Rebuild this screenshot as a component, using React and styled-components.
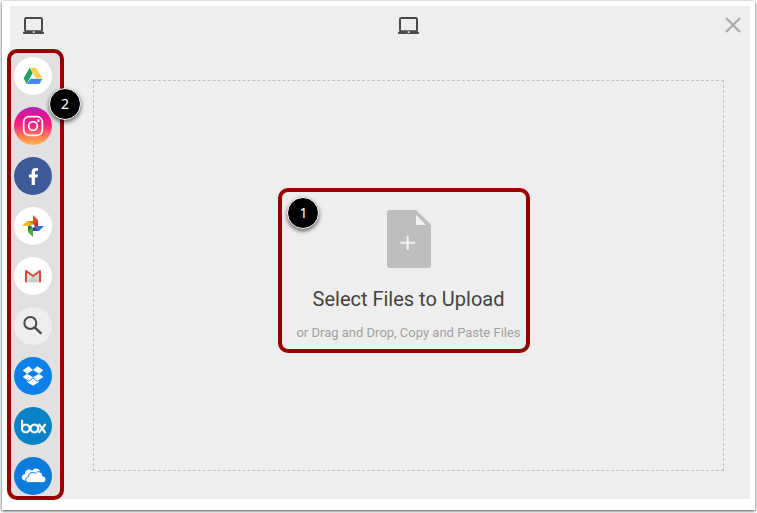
import React from 'react';
import styled, { createGlobalStyle } from 'styled-components';
import { FaFacebookF } from 'react-icons/fa';
import { SiBox } from 'react-icons/si';


const GlobalStyle = createGlobalStyle`
    * {
        box-sizing: border-box;
    }

    body {
        margin: 0;
        background-color: #FFF;
        font-family: Roboto, 'Liberation Sans', sans-serif;
    }

    button {
        padding: 0;
        border: 0;
        background: none;
        font: inherit;
        color: inherit;
        cursor: pointer;
    }

    svg {
        display: block;
    }
`;

const Page = styled.div`
    display: flex;
    min-height: 100vh;
    padding: 1px 2px 3px;
`;

const Frame = styled.div`
    display: flex;
    flex: 1;
    padding: 5px 5px 11px 8px;
    background-color: #FFF;
    box-shadow: 0 1px 3px rgba(0, 0, 0, 0.75);
`;

const Picker = styled.div`
    display: flex;
    flex: 1;
    flex-direction: column;
    background-color: #EEE;
`;

const Header = styled.header`
    display: grid;
    grid-template-columns: 83px 1fr 26px;
    align-items: center;
    height: 44px;
    padding-bottom: 6px;
    color: #4A4A4A;
`;

const DeviceButton = styled.button`
    justify-self: start;
    margin-left: 13px;
`;

const Title = styled.div`
    justify-self: center;
`;

const CloseButton = styled.button`
    justify-self: start;
    margin-left: 1px;
    color: #A8A8A8;
`;

const Body = styled.div`
    display: flex;
    flex: 1;
`;

const Sidebar = styled.nav`
    position: relative;
    display: flex;
    flex-direction: column;
    gap: 12px;
    width: 50px;
    padding: 7px 0 4px 4px;
    background-color: #E1E1E1;
`;

const Source = styled.button`
    width: 38px;
    height: 38px;
    border-radius: 50%;
    background: ${props => props.$fill};
    color: #FFF;
    display: flex;
    align-items: center;
    justify-content: center;
`;

const DropZone = styled.main`
    display: flex;
    flex: 1;
    align-items: center;
    justify-content: center;
    margin: 30px 26px 28px 33px;
    padding-bottom: 11px;
    border: 1px dashed #C0C0C0;
`;

const SelectFiles = styled.button`
    position: relative;
    display: flex;
    flex-direction: column;
    align-items: center;
    padding: 22px 10px 12px;
`;

const SelectTitle = styled.span`
    margin-top: 19px;
    font-size: 20px;
    line-height: 24px;
    color: #434343;
`;

const SelectHint = styled.span`
    margin-top: 14px;
    font-size: 13px;
    line-height: 16px;
    color: #A0A0A0;
`;

const Outline = styled.span`
    position: absolute;
    inset: ${props => props.$inset};
    border: 4px solid #990000;
    border-radius: 10px;
    pointer-events: none;
`;

const Badge = styled.span`
    position: absolute;
    top: ${props => props.$top};
    left: ${props => props.$left};
    width: 32px;
    height: 32px;
    border: 1px solid #FFF;
    border-radius: 50%;
    background-color: #000;
    box-shadow: 0 2px 4px rgba(0, 0, 0, 0.6);
    color: #FFF;
    font-family: 'Noto Sans', sans-serif;
    font-size: 14px;
    line-height: 30px;
    text-align: center;
`;


const Laptop = () => (
    <svg width='21' height='17' viewBox='0 0 63 51' aria-hidden='true'>
        <rect x='6' y='3' width='51' height='40' rx='4' fill='none' stroke='currentColor' strokeWidth='6' />
        <path d='M0 44H63V48Q63 51 60 51H3Q0 51 0 48Z' fill='currentColor' />
        <rect x='29' y='43' width='6' height='5' rx='2' fill='#EEE' />
    </svg>
);

const Cross = () => (
    <svg width='16' height='16' viewBox='0 0 16 16' aria-hidden='true'>
        <path d='M1 1L15 15M15 1L1 15' stroke='currentColor' strokeWidth='2' />
    </svg>
);

const Document = () => (
    <svg width='44' height='58' viewBox='0 0 132 174' aria-hidden='true'>
        <path d='M8 0H87L132 44V166Q132 174 124 174H8Q0 174 0 166V8Q0 0 8 0Z' fill='#BEBEBE' />
        <path d='M87 14L117 45H87Z' fill='#F2F2F2' />
        <path d='M62 77V120M40 98H84' stroke='#F2F2F2' strokeWidth='6' />
    </svg>
);

// every source logo is drawn on the same 114 unit canvas
const Logo = ({ children }) => (
    <svg width='38' height='38' viewBox='0 0 114 114' aria-hidden='true'>{children}</svg>
);

const Drive = () => (
    <Logo>
        <path d='M47 32L29 64L38 81L56 48Z' fill='#1DA362' />
        <path d='M48 32H66L85 64H66Z' fill='#FFD04B' />
        <path d='M49 65H85L76 81H39Z' fill='#4587F4' />
    </Logo>
);

const Instagram = () => (
    <Logo>
        <g fill='none' stroke='#FFF' strokeWidth='5'>
            <rect x='29' y='29' width='56' height='56' rx='16' />
            <circle cx='57' cy='57' r='13' />
        </g>
        <circle cx='73' cy='41' r='4' fill='#FFF' />
    </Logo>
);

const Photos = () => (
    <Logo>
        <path d='M57 24L72 39V57H57Z' fill='#E04A2F' />
        <path d='M72 42V57H57Z' fill='#B8321F' />
        <path d='M90 57L75 72H57V57Z' fill='#3F6FD3' />
        <path d='M72 72H57V57Z' fill='#3B3F9F' />
        <path d='M57 90L42 75V57H57Z' fill='#4CA843' />
        <path d='M42 72V57H57Z' fill='#16794B' />
        <path d='M24 57L39 42H57V57Z' fill='#FBBB16' />
        <path d='M42 42H57V57Z' fill='#EE8A14' />
        <circle cx='57' cy='57' r='5' fill='#FFF' />
    </Logo>
);

const Gmail = () => (
    <Logo>
        <path d='M35 39H79V76H35Z' fill='#E6E6E6' />
        <path d='M38 76L57 57L75 76Z' fill='#C9C9C9' />
        <path d='M39 39H75L57 53Z' fill='#F5F5F5' />
        <path d='M57 57L75 43V76Z' fill='#D6D6D6' />
        <path d='M36 76V42L57 57L78 42V76' fill='none' stroke='#D54C3F' strokeWidth='6' strokeLinejoin='round' />
    </Logo>
);

const Search = () => (
    <Logo>
        <g fill='none' stroke='#484848' strokeWidth='6'>
            <circle cx='49' cy='48' r='18' />
            <path d='M62 61L82 80' strokeWidth='7' />
        </g>
    </Logo>
);

const Dropbox = () => (
    <Logo>
        <g transform='translate(26 28)' fill='#FFF'>
            <path d='M18 0L0 12L13 22L31 11Z' />
            <path d='M44 0L62 12L49 22L31 11Z' />
            <path d='M0 32L18 44L31 33L13 22Z' />
            <path d='M62 32L44 44L31 33L49 22Z' />
            <path d='M31 36L18 47L13 43V47L31 58L49 47V43L44 47Z' />
        </g>
    </Logo>
);

const OneDrive = () => (
    <Logo>
        <path
            d='M34 71C20 70 20 53 33 52C31 39 47 33 54 41C64 29 78 36 80 47L60 71Z'
            fill='#FFF'
        />
        <path
            d='M45 77C32 77 32 61 44 59C43 47 57 43 64 49C72 39 86 45 86 57C99 57 99 77 86 77Z'
            fill='#FFF'
            stroke='#0B7BDC'
            strokeWidth='3'
        />
    </Logo>
);


const sources = [
    { name: 'Google Drive', fill: '#FFF', icon: <Drive /> },
    {
        name: 'Instagram',
        fill: 'linear-gradient(#A52BB5, #E8118F 25%, #FF2480 48%, #FF7A58 76%, #FFB947)',
        icon: <Instagram />
    },
    { name: 'Facebook', fill: '#3D5A99', icon: <FaFacebookF size={17} /> },
    { name: 'Google Photos', fill: '#FFF', icon: <Photos /> },
    { name: 'Gmail', fill: '#FFF', icon: <Gmail /> },
    { name: 'Web Search', fill: '#EEE', icon: <Search /> },
    { name: 'Dropbox', fill: '#0A80E8', icon: <Dropbox /> },
    { name: 'Box', fill: '#0A82C8', icon: <SiBox size={25} strokeWidth={0.3} stroke='#FFF' /> },
    { name: 'OneDrive', fill: '#0B7BDC', icon: <OneDrive /> }
];


const App = () => {

    return (
        <Page>
            <GlobalStyle />
            <Frame>
                <Picker>
                    <Header>
                        <DeviceButton aria-label='My Device'><Laptop /></DeviceButton>
                        <Title><Laptop /></Title>
                        <CloseButton aria-label='Close'><Cross /></CloseButton>
                    </Header>

                    <Body>
                        <Sidebar>
                            {sources.map(source => (
                                <Source key={source.name} $fill={source.fill} aria-label={source.name}>
                                    {source.icon}
                                </Source>
                            ))}
                            <Outline $inset='-1px -4px -1px -3px' />
                            <Badge $top='38px' $left='39px'>2</Badge>
                        </Sidebar>

                        <DropZone>
                            <SelectFiles>
                                <Document />
                                <SelectTitle>Select Files to Upload</SelectTitle>
                                <SelectHint>or Drag and Drop, Copy and Paste Files</SelectHint>
                                <Outline $inset='0 1px 0 -8px' />
                                <Badge $top='9px' $left='1px'>1</Badge>
                            </SelectFiles>
                        </DropZone>
                    </Body>
                </Picker>
            </Frame>
        </Page>
    );
};

export default App;
